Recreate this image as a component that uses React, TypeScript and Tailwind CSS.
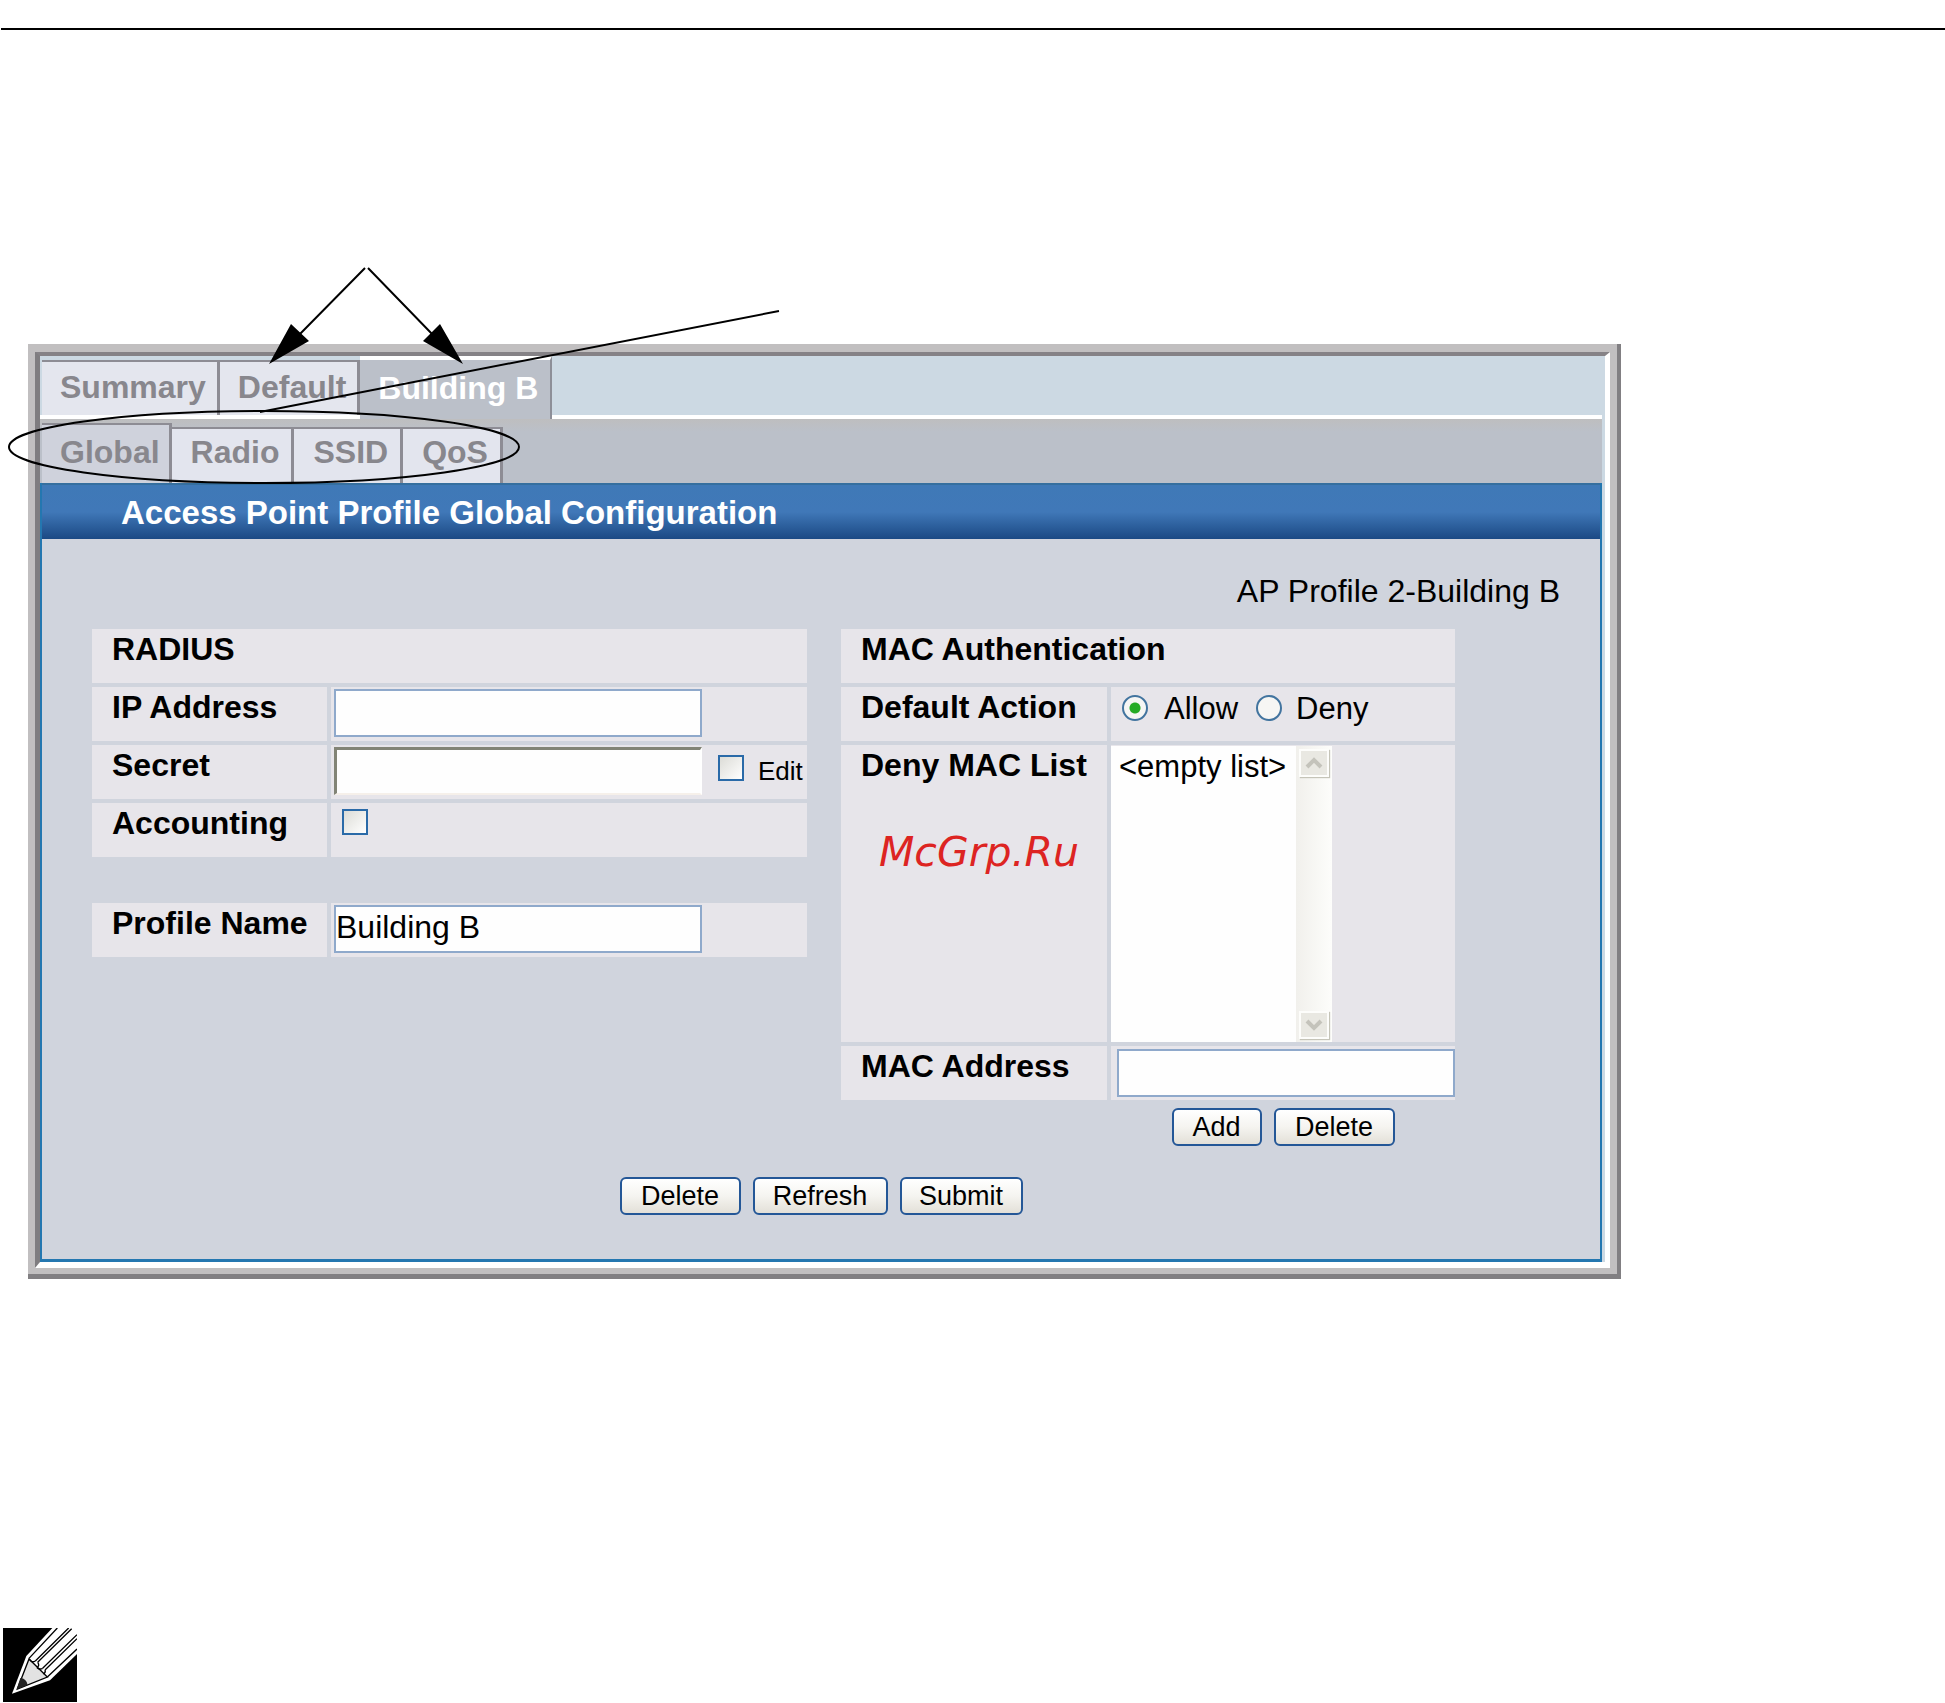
import { useState } from 'react';

const topTabs = ['Summary', 'Default'];
const subTabs = ['Radio', 'SSID', 'QoS'];

const labelCell = 'bg-[#e7e5ea] pl-5 pt-[2px] text-[32px] leading-9 font-bold';
const valueCell = 'bg-[#e7e5ea] pl-[3px]';
const textBox = 'border-2 border-[#8fa9cb] bg-[#fefefe] pb-1 text-[32px] outline-none';
const checkBox = 'h-[26px] w-[26px] shrink-0 appearance-none border-2 border-[#2a6aa8] bg-linear-to-br from-[#dcdcd7] to-white';
const radio = 'h-[26px] w-[26px] shrink-0 appearance-none rounded-full border-2 border-[#42749f] bg-[#f6f6f4] checked:bg-[radial-gradient(circle,#25ab25_0_5px,#f6f6f4_6px)]';

function XpButton({ children, width }: { children: string; width: string }) {
    return (
        <button type="button" className={`${width} h-[38px] rounded-[6px] border-2 border-[#245797] bg-linear-to-b from-white via-[#f5f4f0] to-[#e3e0d8] text-[27px] leading-8`}>
            {children}
        </button>
    );
}

function ScrollArrow({ down }: { down?: boolean }) {
    return (
        <div className="m-[3px] flex h-7 items-center justify-center border-2 border-[#fdfdfb] bg-[#e9e8e2] shadow-[1px_1px_1px_#c5c4b8]">
            <svg width="18" height="14" viewBox="0 0 18 14" fill="none" stroke="#c4c3bb" strokeWidth="4">
                <path d={down ? 'M2 3l7 7 7-7' : 'M2 11l7-7 7 7'} />
            </svg>
        </div>
    );
}

function Annotations() {
    return (
        <svg className="pointer-events-none absolute top-0 left-0" width="800" height="500" fill="none" stroke="#000" strokeWidth="2">
            <ellipse cx="264" cy="447" rx="255" ry="36" />
            <path d="M260 412L779 311M365 268L298 336M368 268L434 336" />
            <path d="M269 364L291 324L309 341ZM463 364L440 324L423 341Z" fill="#000" stroke="none" />
        </svg>
    );
}

function PencilIcon() {
    return (
        <svg width="74" height="74" viewBox="9 84 222 222">
            <rect x="9" y="84" width="222" height="222" fill="#000" />
            <path d="M36 281L79 168L157 84H231V162L150 241Z" fill="#fff" />
            <path d="M52 267L87 177L142 231Z" fill="#e2e2e2" stroke="#000" strokeWidth="4" />
            <path d="M50 268L61 234Q79 235 83 255Z" fill="#222" />
            <g fill="none" stroke="#000" strokeWidth="4">
                <path d="M87 175L172 84M142 231L231 147" />
                <path d="M106 183L206 84M113 187L215 86M128 205L231 104M135 210L231 116" />
                <path d="M88 176Q94 190 106 183M113 187Q120 196 111 203M128 205Q120 210 111 203M135 210Q138 218 130 222" />
            </g>
        </svg>
    );
}

export default function App() {
    const [action, setAction] = useState('allow');
    const [profileName, setProfileName] = useState('Building B');

    return (
        <main className="relative bg-white pt-7 font-['Liberation_Sans',Arial,sans-serif] text-black">
            <hr className="ml-px border-t-2 border-black" />

            <section className="mt-[314px] mr-[324px] ml-7 border-r-4 border-b-[5px] border-[#817f82] bg-[#c1bfc0] pt-2 pr-[7px] pb-[6px] pl-[7px]">
                <div className="border-t-4 border-r-[5px] border-b-[6px] border-l-[5px] border-t-[#858286] border-r-white border-b-white border-l-[#7f7d80] bg-[#ccd9e3] pr-[3px]">
                    <nav className="flex h-[63px] text-[32px] font-bold text-[#88878d]">
                        <div className="flex border-b-4 border-white pt-1 pl-0.5">
                            {topTabs.map((tab) => (
                                <button key={tab} type="button" className="border-t-2 border-r-[3px] border-[#8d8c94] bg-[#e4e6ee] pt-1 pr-[11px] pb-2 pl-[18px] leading-10">{tab}</button>
                            ))}
                        </div>
                        <button type="button" className="border-t-4 border-r-2 border-t-white border-r-[#8d8f98] bg-[#bbc0c9] pt-1 pr-3 pb-2 pl-[18px] leading-10 text-white">Building B</button>
                        <div className="flex-1 border-b-4 border-white" />
                    </nav>

                    <nav className="flex h-16 bg-linear-to-b from-[#bebebf] to-[#bbc0c9] to-20% pt-1 pl-0.5 text-[32px] font-bold text-[#88878d]">
                        <button type="button" className="border-t-2 border-r-[3px] border-[#8d8c94] bg-[#cfd2dc] pt-1 pr-[9px] pb-2 pl-[18px] leading-10">Global</button>
                        {subTabs.map((tab) => (
                            <button key={tab} type="button" className="mt-1 border-t-2 border-r-[3px] border-[#8d8c94] bg-[#e3e5ee] pr-3 pb-2 pl-[19px] leading-10">{tab}</button>
                        ))}
                    </nav>

                    <form className="border-x-2 border-b-[3px] border-[#2477b0] bg-[#d0d4dd]">
                        <h1 className="h-14 border-t-2 border-[#356f9f] bg-linear-to-b from-[#3f79b7] via-[#4078b8] to-[#1b4984] pl-[79px] text-[33px] leading-14 font-bold text-white">
                            Access Point Profile Global Configuration
                        </h1>
                        <p className="pt-[34px] pr-10 text-right text-[32px] leading-9">AP Profile 2-Building B</p>

                        <div className="mt-5 flex items-start gap-[34px] pr-[145px] pl-[50px]">
                            <div className="flex-[715]">
                                <div className="grid auto-rows-[54px] grid-cols-[235px_1fr] gap-1">
                                    <h2 className={`${labelCell} col-span-2`}>RADIUS</h2>
                                    <label htmlFor="ip" className={labelCell}>IP Address</label>
                                    <div className={`${valueCell} pt-[2px]`}>
                                        <input id="ip" type="text" className={`${textBox} h-12 w-[368px]`} />
                                    </div>
                                    <label htmlFor="secret" className={labelCell}>Secret</label>
                                    <div className={`${valueCell} flex items-start pt-[2px]`}>
                                        <input id="secret" type="password" className="h-12 w-[368px] border-t-[3px] border-r-2 border-b-2 border-l-[3px] border-t-[#828476] border-r-white border-b-[#f6f0ea] border-l-[#828476] bg-[#fefefe] text-[32px] outline-none" />
                                        <input id="edit" type="checkbox" className={`${checkBox} mt-2 ml-4`} />
                                        <label htmlFor="edit" className="mt-2 ml-3.5 text-[26px] leading-8">Edit</label>
                                    </div>
                                    <label htmlFor="accounting" className={labelCell}>Accounting</label>
                                    <div className={`${valueCell} pt-[6px]`}>
                                        <input id="accounting" type="checkbox" className={`${checkBox} ml-2 block`} />
                                    </div>
                                </div>

                                <div className="mt-[46px] grid auto-rows-[54px] grid-cols-[235px_1fr] gap-1">
                                    <label htmlFor="profile" className={labelCell}>Profile Name</label>
                                    <div className={`${valueCell} pt-[2px]`}>
                                        <input id="profile" type="text" value={profileName} onChange={(e) => setProfileName(e.target.value)} className={`${textBox} h-12 w-[368px]`} />
                                    </div>
                                </div>
                            </div>

                            <div className="grid flex-[614] grid-cols-[266px_1fr] grid-rows-[54px_54px_297px_54px] gap-1">
                                <h2 className={`${labelCell} col-span-2`}>MAC Authentication</h2>
                                <span className={labelCell}>Default Action</span>
                                <div className="flex items-start bg-[#e7e5ea] pt-2 pl-[11px] text-[31px] leading-7">
                                    <input id="allow" type="radio" name="action" checked={action === 'allow'} onChange={() => setAction('allow')} className={radio} />
                                    <label htmlFor="allow" className="ml-4">Allow</label>
                                    <input id="deny" type="radio" name="action" checked={action === 'deny'} onChange={() => setAction('deny')} className={`${radio} ml-[18px]`} />
                                    <label htmlFor="deny" className="ml-3.5">Deny</label>
                                </div>
                                <div className={labelCell}>
                                    <label htmlFor="maclist">Deny MAC List</label>
                                    <p className="mt-[45px] ml-[18px] font-['DejaVu_Sans',sans-serif] text-[41px] leading-12 font-normal text-[#dd2422] italic">McGrp.Ru</p>
                                </div>
                                <div className="flex bg-[#e7e5ea] pt-px">
                                    <select id="maclist" size={8} className="w-[185px] appearance-none overflow-hidden bg-[#fefefe] pt-[3px] pl-2 text-[31px] outline-none">
                                        <option className="p-0 leading-9">&lt;empty list&gt;</option>
                                    </select>
                                    <div className="flex w-9 flex-col justify-between bg-linear-to-r from-[#f1f0ec] to-[#fdfdfb]">
                                        <ScrollArrow />
                                        <ScrollArrow down />
                                    </div>
                                </div>
                                <label htmlFor="mac" className={labelCell}>MAC Address</label>
                                <div className="bg-[#e7e5ea] pt-[3px] pl-[6px]">
                                    <input id="mac" type="text" className={`${textBox} h-12 w-full`} />
                                </div>
                                <div className="col-start-2 flex justify-center gap-3 pt-1">
                                    <XpButton width="w-[90px]">Add</XpButton>
                                    <XpButton width="w-[121px]">Delete</XpButton>
                                </div>
                            </div>
                        </div>

                        <div className="mt-[31px] flex justify-center gap-3 pb-11">
                            <XpButton width="w-[121px]">Delete</XpButton>
                            <XpButton width="w-[135px]">Refresh</XpButton>
                            <XpButton width="w-[123px]">Submit</XpButton>
                        </div>
                    </form>
                </div>
            </section>

            <div className="mt-[349px] pl-[3px]">
                <PencilIcon />
            </div>
            <Annotations />
        </main>
    );
}
